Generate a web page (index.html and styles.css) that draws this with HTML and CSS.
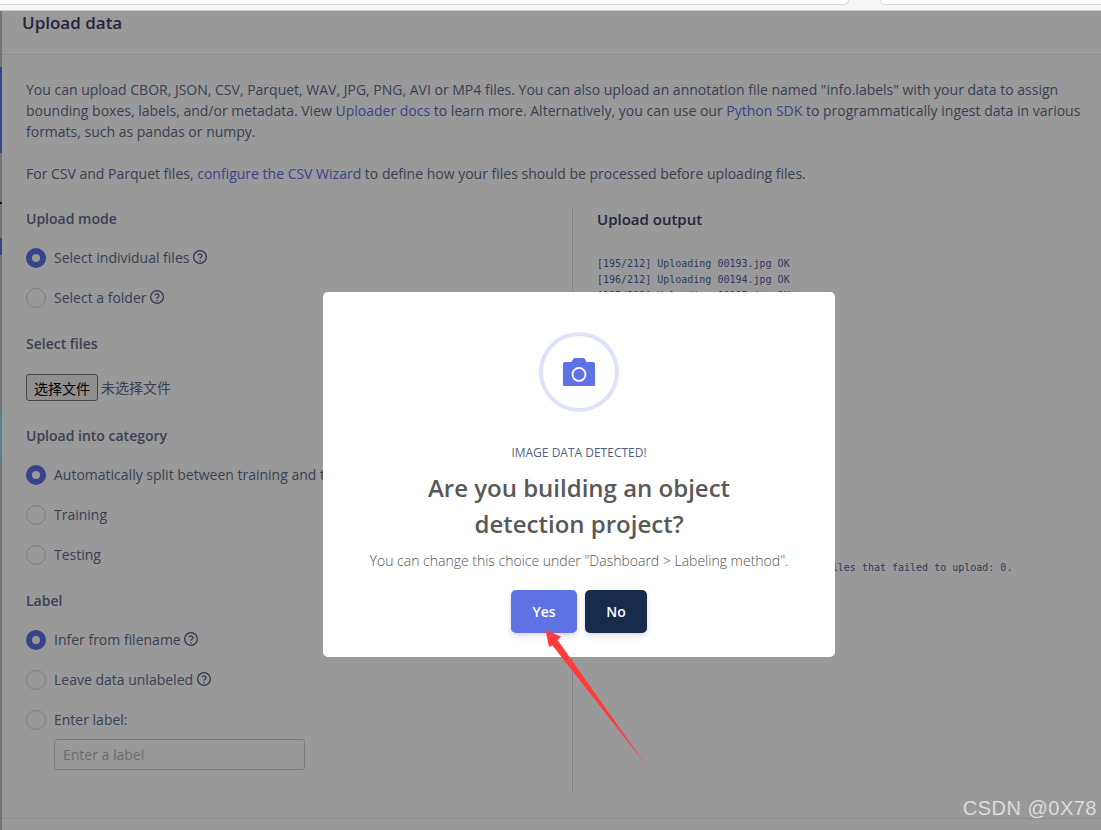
FILE: index.html
```html
<!DOCTYPE html>
<html lang="en">

<head>
    <meta charset="UTF-8">
    <title>Upload data</title>
    <link rel="stylesheet" href="styles.css">
</head>

<body>
    <div class="tabs">
        <div class="tab tab-l"></div>
        <div class="tab tab-r"></div>
    </div>

    <div class="page">
        <div class="sliver">
            <i class="s-a"></i>
            <i class="s-blue s-b"></i>
            <i class="s-c"></i>
            <i class="s-dark"></i>
            <i class="s-c2"></i>
            <i class="s-blue s-d"></i>
            <i class="s-e"></i>
            <i class="s-teal"></i>
        </div>

        <div class="panel">
            <h2 class="panel-title">Upload data</h2>

            <div class="intro">
                <p>You can upload CBOR, JSON, CSV, Parquet, WAV, JPG, PNG, AVI or MP4 files. You can also upload an annotation file named "info.labels" with your data to assign bounding boxes, labels, and/or metadata. View <a href="#">Uploader docs</a> to learn more. Alternatively, you can use our <a href="#">Python SDK</a> to programmatically ingest data in various formats, such as pandas or numpy.</p>
                <p>For CSV and Parquet files, <a href="#">configure the CSV Wizard</a> to define how your files should be processed before uploading files.</p>
            </div>

            <div class="cols">
                <div class="col-l">
                    <h4 class="label-head">Upload mode</h4>
                    <div class="radio on">Select individual files <svg class="help" viewBox="1 1 22 22"><circle cx="12" cy="12" r="10"/><path d="M8.800 9.200a3.300 3.300 0 0 1 6.400 .8c0 2.200-3.200 2.600-3.200 4.600"/><circle class="dot" cx="12" cy="18" r="1.300"/></svg></div>
                    <div class="radio">Select a folder <svg class="help" viewBox="1 1 22 22"><circle cx="12" cy="12" r="10"/><path d="M8.800 9.200a3.300 3.300 0 0 1 6.400 .8c0 2.200-3.200 2.600-3.200 4.600"/><circle class="dot" cx="12" cy="18" r="1.300"/></svg></div>

                    <h4 class="label-head head-files">Select files</h4>
                    <div class="file-row">
                        <button class="file-btn">选择文件</button>
                        <span class="file-none">未选择文件</span>
                    </div>

                    <h4 class="label-head head-cat">Upload into category</h4>
                    <div class="radio on">Automatically split between training and testing</div>
                    <div class="radio">Training</div>
                    <div class="radio">Testing</div>

                    <h4 class="label-head head-label">Label</h4>
                    <div class="radio on">Infer from filename <svg class="help" viewBox="1 1 22 22"><circle cx="12" cy="12" r="10"/><path d="M8.800 9.200a3.300 3.300 0 0 1 6.400 .8c0 2.200-3.200 2.600-3.200 4.600"/><circle class="dot" cx="12" cy="18" r="1.300"/></svg></div>
                    <div class="radio">Leave data unlabeled <svg class="help" viewBox="1 1 22 22"><circle cx="12" cy="12" r="10"/><path d="M8.800 9.200a3.300 3.300 0 0 1 6.400 .8c0 2.200-3.200 2.600-3.200 4.600"/><circle class="dot" cx="12" cy="18" r="1.300"/></svg></div>
                    <div class="radio">Enter label:</div>
                    <input class="label-input" type="text" placeholder="Enter a label">
                </div>

                <div class="col-r">
                    <h3 class="output-head">Upload output</h3>
                    <pre class="log">[195/212] Uploading 00193.jpg OK
[196/212] Uploading 00194.jpg OK
[197/212] Uploading 00195.jpg OK
[198/212] Uploading 00196.jpg OK
[199/212] Uploading 00197.jpg OK
[200/212] Uploading 00198.jpg OK
[201/212] Uploading 00199.jpg OK
[202/212] Uploading 00200.jpg OK
[203/212] Uploading 00201.jpg OK
[204/212] Uploading 00202.jpg OK
[205/212] Uploading 00203.jpg OK
[206/212] Uploading 00204.jpg OK
[207/212] Uploading 00205.jpg OK
[208/212] Uploading 00206.jpg OK
[209/212] Uploading 00207.jpg OK
[210/212] Uploading 00208.jpg OK
[211/212] Uploading 00209.jpg OK
[212/212] Uploading 00210.jpg OK

Done. Files uploaded successful: 212. Files that failed to upload: 0.</pre>
                </div>
            </div>

            <div class="panel-foot"></div>
        </div>
    </div>

    <!-- 弹窗遮罩 -->
    <div class="mask">
        <div class="modal">
            <div class="modal-icon">
                <svg viewBox="0 0 32 28.500" width="32" height="28.500">
                    <path class="cam" d="M2 4h6.500L10 1.200C10.400 .4 11 0 11.800 0h8.400c.8 0 1.400 .4 1.800 1.200L23.500 4H30c1.200 0 2 .8 2 2V26.500c0 1.200-.8 2-2 2H2c-1.200 0-2-.8-2-2V6c0-1.200 .8-2 2-2z"/>
                    <circle class="lens" cx="16" cy="16.400" r="6.500"/>
                </svg>
            </div>
            <div class="modal-tag">IMAGE DATA DETECTED!</div>
            <h2 class="modal-title">Are you building an object<br>detection project?</h2>
            <div class="modal-text">You can change this choice under "Dashboard &gt; Labeling method".</div>
            <div class="modal-btns">
                <button class="btn btn-yes">Yes</button>
                <button class="btn btn-no">No</button>
            </div>
        </div>
    </div>

    <!-- 截图上的红色箭头 -->
    <svg class="arrow" viewBox="0 0 1101 830" width="1101" height="830">
        <path d="M545.500 630L561 636.500L557.500 640L644.500 763L552.500 645.500L549 647Z"/>
    </svg>

    <div class="mark">CSDN @0X78</div>
</body>

</html>
```

FILE: styles.css
```css
*,
*::before {
    padding: 0;
    margin: 0;
    box-sizing: border-box;
}

html,
body {
    height: 100%;
    overflow: hidden;
}

body {
    background-color: #fff;
    font-family: "Open Sans", "Noto Sans CJK SC", sans-serif;
    font-size: 14px;
    line-height: 21px;
    color: #5f6b8a;
}

a {
    color: #5e72e4;
    text-decoration: none;
}

/* 顶部浏览器标签的一点残留 */
.tabs {
    height: 11px;
    background-color: #f6f6f6;
    border-bottom: 1px solid #c8c8c8;
    display: flex;
    justify-content: space-between;
}

.tab {
    height: 5px;
    background-color: #fff;
    border-bottom: 1px solid #d8d8d8;
}

.tab-l {
    width: 849px;
    border-right: 1px solid #d8d8d8;
    border-bottom-right-radius: 8px;
}

.tab-r {
    width: 221px;
    border-left: 1px solid #d8d8d8;
    border-bottom-left-radius: 8px;
}

.page {
    display: flex;
    height: 819px;
}

/* 左边露出来的一条侧栏 */
.sliver {
    width: 2px;
    display: flex;
    flex-direction: column;
    flex-shrink: 0;
    background-color: #c0c0c0;
}

.sliver i {
    display: block;
}

.sliver .s-a {
    height: 56px;
}

.sliver .s-blue {
    background-color: #5e72e4;
}

.sliver .s-b {
    height: 86px;
}

.sliver .s-c {
    height: 49px;
}

.sliver .s-dark {
    height: 2px;
    background-color: #222;
}

.sliver .s-c2 {
    height: 34px;
}

.sliver .s-d {
    height: 17px;
}

.sliver .s-e {
    height: 155px;
}

.sliver .s-teal {
    height: 50px;
    background-color: #93d5e9;
}

.panel {
    flex: 1;
    min-width: 0;
}

.panel-title {
    height: 44px;
    padding-left: 20px;
    font-size: 17px;
    font-weight: 600;
    line-height: 24px;
    color: #3c3c66;
    border-bottom: 1px solid #e9ecef;
}

.intro {
    padding: 24px 20px 0 24px;
}

.intro p {
    margin-bottom: 21px;
}

.cols {
    display: flex;
    margin-left: 24px;
    margin-top: 24px;
}

.col-l {
    width: 547px;
    border-right: 1px solid #e0e0e0;
    height: 585px;
}

.col-r {
    padding-left: 24px;
}

.panel-foot {
    margin-top: 25px;
    border-top: 1px solid #e9ecef;
}

.label-head {
    font-size: 14px;
    font-weight: 600;
    line-height: 21px;
    height: 21px;
    margin-bottom: 8px;
}

.head-files {
    margin-top: 16px;
    margin-bottom: 20px;
}

.head-cat {
    margin-top: 24px;
    margin-bottom: 8px;
}

.head-label {
    margin-top: 16px;
    margin-bottom: 8px;
}

.radio {
    height: 40px;
    display: flex;
    align-items: center;
    position: relative;
    padding-left: 28px;
    white-space: pre;
}

/* 单选圆圈 */
.radio::before {
    content: "";
    position: absolute;
    left: 0;
    top: 11px;
    width: 20px;
    height: 20px;
    border-radius: 50%;
    border: 1px solid #cad1d7;
    background-color: #fff;
}

.radio.on::before {
    border: 6px solid #5e72e4;
}

.help {
    width: 14px;
    height: 14px;
    fill: none;
    stroke: #525f7f;
    stroke-width: 2;
}

.help .dot {
    fill: #525f7f;
    stroke: none;
}

.file-row {
    display: flex;
    align-items: center;
    height: 27px;
}

.file-btn {
    width: 72px;
    height: 27px;
    font-family: "Noto Sans CJK SC", sans-serif;
    font-size: 14px;
    color: #000;
    background-color: #efefef;
    border: 1px solid #767676;
    border-radius: 3px;
}

.file-none {
    margin-left: 3px;
    font-size: 14px;
    font-family: "Noto Sans CJK SC", sans-serif;
}

.label-input {
    display: block;
    width: 251px;
    height: 31px;
    margin: 0 0 0 28px;
    padding: 0 8px;
    font-family: "Open Sans", sans-serif;
    font-size: 14px;
    color: #525f7f;
    border: 1px solid #cad1d7;
    border-radius: 3px;
    outline: none;
}

.label-input::placeholder {
    color: #adb5bd;
}

.output-head {
    font-size: 15px;
    font-weight: 600;
    line-height: 23px;
    color: #3c3c66;
}

.log {
    margin-top: 25px;
    font-family: "DejaVu Sans Mono", monospace;
    font-size: 10px;
    line-height: 16px;
    color: #525f9f;
}

/* 遮罩和弹窗 */
.mask {
    position: absolute;
    left: 0;
    top: 11px;
    right: 0;
    bottom: 0;
    background-color: rgba(0, 0, 0, .4);
    display: flex;
    justify-content: center;
    align-items: flex-start;
    padding: 281px 0 0 57px;
}

.modal {
    width: 512px;
    height: 365px;
    background-color: #fff;
    border-radius: 5px;
    padding-top: 40px;
    text-align: center;
}

.modal-icon {
    width: 80px;
    height: 80px;
    margin: 0 auto;
    border: 4px solid #dfe3fa;
    border-radius: 50%;
    display: flex;
    align-items: center;
    justify-content: center;
}

.cam {
    fill: #5e72e4;
}

.lens {
    fill: none;
    stroke: #fff;
    stroke-width: 1.800;
}

.modal-tag {
    margin-top: 30px;
    font-size: 12px;
    line-height: 22px;
    color: #525f7f;
}

.modal-title {
    margin-top: 6px;
    font-size: 24px;
    font-weight: 600;
    line-height: 36px;
    color: #595959;
}

.modal-text {
    margin-top: 8px;
    font-size: 14px;
    font-weight: 300;
    line-height: 21px;
    color: #545454;
}

.modal-btns {
    display: flex;
    justify-content: center;
    gap: 8px;
    margin-top: 19px;
}

.btn {
    height: 43px;
    border: 0;
    border-radius: 5px;
    font-family: "Open Sans", sans-serif;
    font-size: 14px;
    font-weight: 600;
    color: #fff;
    box-shadow: 0 4px 6px rgba(50, 50, 93, .11), 0 1px 3px rgba(0, 0, 0, .08);
}

.btn-yes {
    width: 66px;
    background-color: #5e72e4;
}

.btn-no {
    width: 62px;
    background-color: #172b4d;
}

.arrow {
    position: absolute;
    left: 0;
    top: 0;
    fill: #ff3b3b;
}

.mark {
    position: absolute;
    right: 4px;
    top: 796px;
    font-family: "Liberation Sans", sans-serif;
    font-size: 20px;
    line-height: 24px;
    letter-spacing: .5px;
    color: #dcdcdc;
}
```
